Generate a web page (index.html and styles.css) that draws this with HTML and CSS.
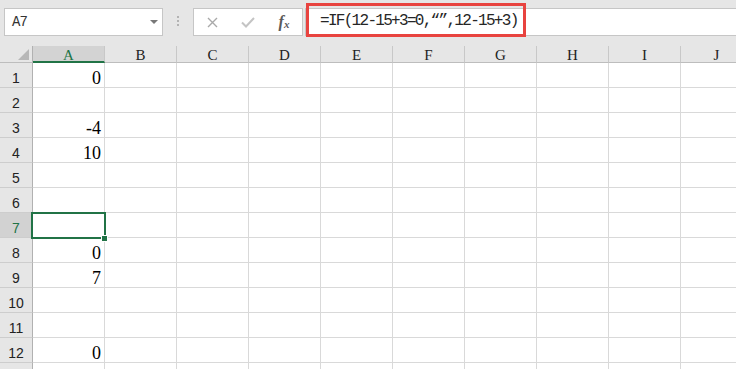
FILE: index.html
```html
<!DOCTYPE html>
<html lang="zh-CN">
<head>
    <meta charset="UTF-8">
    <meta name="viewport" content="width=device-width, initial-scale=1.0">
    <title>Excel</title>
    <link rel="stylesheet" href="styles.css">
</head>
<body>
    <!-- 编辑栏 -->
    <div class="bar">
        <div class="namebox"><span>A7</span><i class="arrow"></i></div>
        <div class="dots"><i></i><i></i><i></i></div>
        <div class="btns">
            <span class="cancel">
                <svg width="11" height="11" viewBox="0 0 11 11"><path d="M1 1L10 10M10 1L1 10" stroke="#a9a9a9" stroke-width="1.4" fill="none"/></svg>
            </span>
            <span class="enter">
                <svg width="14" height="11" viewBox="0 0 14 11"><path d="M1 5.5L5 9.5L13 1" stroke="#c4c4c4" stroke-width="2" fill="none"/></svg>
            </span>
            <span class="fx"><em>f</em><em class="x">x</em></span>
        </div>
        <div class="formula">
            <div class="mark">=IF(12-15+3=0,“”,12-15+3)</div>
        </div>
    </div>
    <!-- 表格 -->
    <div class="sheet" id="sheet"></div>
    <script>
        var cols = ["A", "B", "C", "D", "E", "F", "G", "H", "I", "J"];
        var vals = { 1: "0", 3: "-4", 4: "10", 8: "0", 9: "7", 12: "0" };
        var sheet = document.getElementById("sheet");
        var html = '<div class="corner"><i></i></div>';
        for (var c = 0; c < cols.length; c++) {
            html += '<div class="colhead' + (c == 0 ? ' current' : '') + '">' + cols[c] + '</div>';
        }
        // 第13行只露出一点，不写行号
        for (var r = 1; r <= 13; r++) {
            html += '<div class="rowhead' + (r == 7 ? ' current' : '') + '">' + (r < 13 ? r : '') + '</div>';
            for (var c = 0; c < cols.length; c++) {
                var v = (c == 0 && vals[r]) ? vals[r] : '';
                // 选中的单元格 A7
                if (c == 0 && r == 7) {
                    v = '<i class="sel"></i><i class="handle"></i>';
                }
                html += '<div class="cell">' + v + '</div>';
            }
        }
        sheet.innerHTML = html;
    </script>
</body>
</html>
```

FILE: styles.css
```css
*{
    margin: 0;
    padding: 0;
    box-sizing: border-box;
}
body{
    background: #fff;
    overflow: hidden;
    font-family: "Liberation Sans", sans-serif;
}
.bar{
    height: 46px;
    background: #e6e6e6;
    display: flex;
    align-items: flex-start;
    padding: 8px 0 0 4px;
}
.namebox{
    width: 159px;
    height: 28px;
    background: #fff;
    border: 1px solid #c6c6c6;
    display: flex;
    align-items: center;
    justify-content: space-between;
    padding: 0 4px 0 7px;
    font-family: "Liberation Mono", monospace;
    font-size: 14px;
    letter-spacing: -1px;
    color: #333;
}
.namebox .arrow{
    width: 0;
    height: 0;
    border-left: 4px solid transparent;
    border-right: 4px solid transparent;
    border-top: 4px solid #787878;
}
.dots{
    display: flex;
    flex-direction: column;
    gap: 2px;
    margin: 8px 0 0 14px;
}
.dots i{
    width: 2px;
    height: 2px;
    background: #b3b3b3;
}
.btns{
    width: 110px;
    height: 28px;
    margin-left: 14px;
    background: #fff;
    border: 1px solid #c6c6c6;
    display: flex;
}
.btns span{
    width: 36px;
    display: flex;
    align-items: center;
    justify-content: center;
}
.btns .fx{
    font-family: "Liberation Serif", serif;
    font-size: 16px;
    color: #5a5a5a;
    font-weight: bold;
}
.btns .fx .x{
    font-size: 11px;
    margin-top: 4px;
}
.formula{
    flex: 1;
    height: 28px;
    margin-left: 2px;
    background: #fff;
    border: 1px solid #c6c6c6;
    border-right: 0;
    position: relative;
}
.formula .mark{
    position: absolute;
    left: 0;
    top: -6px;
    width: 220px;
    height: 34px;
    border: 3px solid #e8433f;
    padding: 3px 0 0 11px;
    font-family: "Liberation Mono", monospace;
    font-size: 16px;
    letter-spacing: -1.7px;
    line-height: 24px;
    color: #262626;
    white-space: nowrap;
}
.sheet{
    display: grid;
    grid-template-columns: 33px repeat(10, 72px);
    grid-template-rows: 17px repeat(13, 25px);
    width: 736px;
    overflow: hidden;
}
.corner{
    background: #e6e6e6;
    border-right: 1px solid #b1b1b1;
    border-bottom: 1px solid #bdbdbd;
    display: flex;
    align-items: flex-end;
    justify-content: flex-end;
    padding: 0 3px 2px 0;
}
.corner i{
    width: 0;
    height: 0;
    border-left: 11px solid transparent;
    border-bottom: 11px solid #b7b7b7;
}
.colhead{
    background: #e6e6e6;
    border-right: 1px solid #c8c8c8;
    border-bottom: 1px solid #bdbdbd;
    text-align: center;
    font-family: "Liberation Serif", serif;
    font-size: 15px;
    line-height: 18px;
    color: #222;
}
.colhead.current{
    background: #d3d3d3;
    color: #217346;
    border-bottom: 2px solid #217346;
}
.rowhead{
    background: #e6e6e6;
    border-right: 1px solid #b1b1b1;
    border-bottom: 1px solid #cdcdcd;
    display: flex;
    align-items: flex-end;
    justify-content: center;
    font-size: 14px;
    line-height: 18px;
    color: #222;
}
.rowhead.current{
    background: #d2d2d2;
    color: #217346;
}
.cell{
    position: relative;
    border-right: 1px solid #d9d9d9;
    border-bottom: 1px solid #d9d9d9;
    display: flex;
    align-items: flex-end;
    justify-content: flex-end;
    padding-right: 3px;
    font-family: "Liberation Serif", serif;
    font-size: 18px;
    line-height: 18px;
    color: #000;
}
.cell .sel{
    position: absolute;
    z-index: 2;
    left: -2px;
    top: -1px;
    width: 75px;
    height: 27px;
    border: 2px solid #217346;
}
.cell .handle{
    position: absolute;
    z-index: 3;
    left: 68px;
    top: 22px;
    width: 7px;
    height: 7px;
    background: #217346;
    border: 1px solid #fff;
}
```
